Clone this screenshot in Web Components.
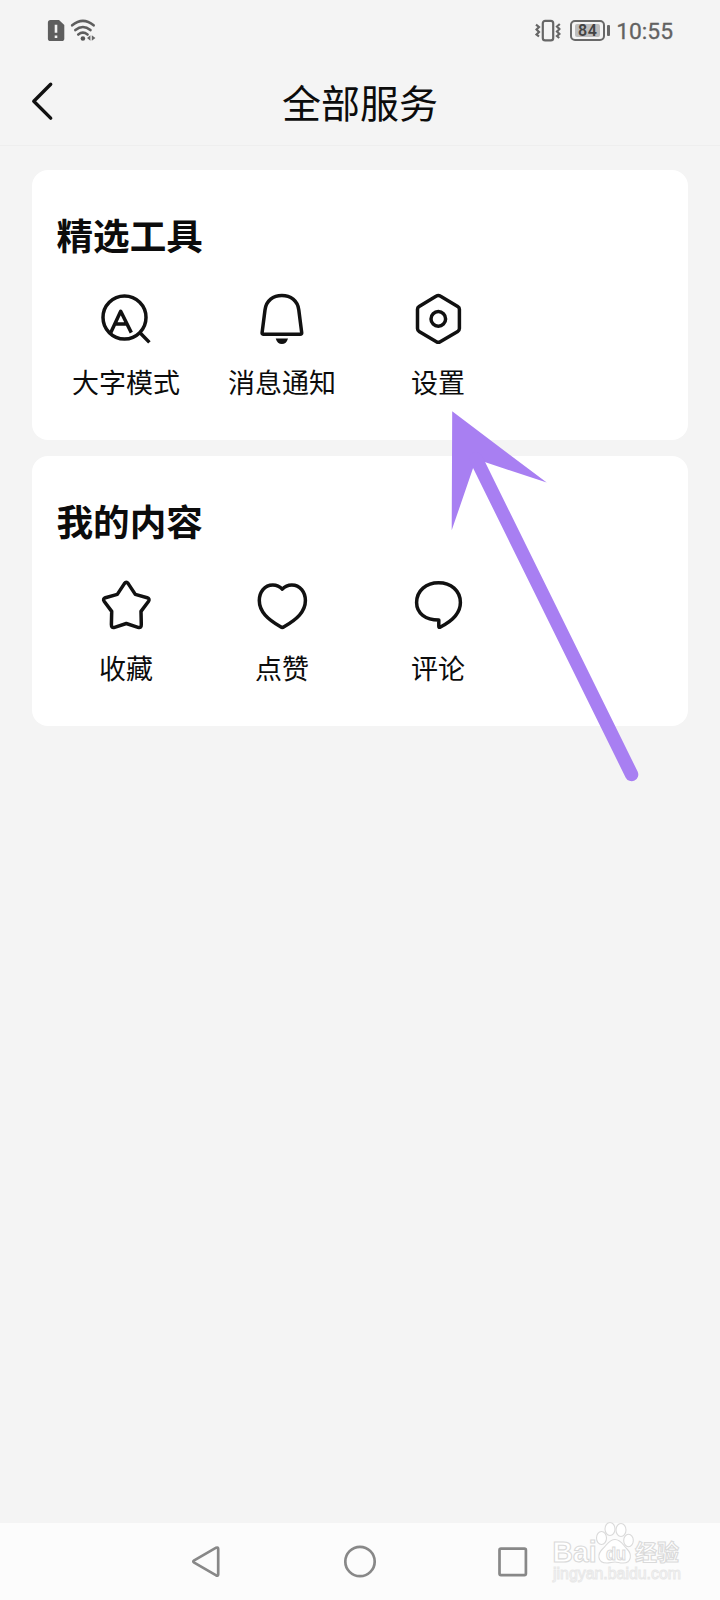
<!DOCTYPE html>
<html lang="zh-CN">
<head>
<meta charset="utf-8">
<title>全部服务</title>
<style>
    body {
        margin: 0;
        background: #f4f4f4;
        color: #0c0c0c;
        font-family: "Noto Sans CJK SC", sans-serif;
    }
</style>
</head>
<body>
<services-page>
    <status-bar slot="top" time="10:55" battery="84"></status-bar>
    <page-header slot="top">全部服务</page-header>
    <service-card heading="精选工具">
        <service-item icon="search">大字模式</service-item>
        <service-item icon="bell">消息通知</service-item>
        <service-item icon="settings">设置</service-item>
    </service-card>
    <service-card heading="我的内容">
        <service-item icon="star">收藏</service-item>
        <service-item icon="heart">点赞</service-item>
        <service-item icon="comment">评论</service-item>
    </service-card>
    <nav-bar slot="bottom"></nav-bar>
    <pointer-arrow slot="over"></pointer-arrow>
    <water-mark slot="over"></water-mark>
</services-page>

<script>
const icons = {
    search: `
        <circle cx="28.5" cy="28.5" r="21.5"/>
        <path d="M44 43.7 53.4 53.4M14.6 44 24.7 22.3 35.3 43.6M19 35H31"/>`,
    bell: `
        <path d="M11.6 45.3H48.2Q49.9 45.3 49.7 43.6L46.8 21C45.6 11.5 38.5 6.6 29.9 6.6S14.2 11.5 13 21L10.1 43.6Q9.9 45.3 11.6 45.3Z"/>
        <path d="M23.7 49.4H36Q34.4 55 29.9 55T23.7 49.4Z" fill="#111" stroke="none"/>`,
    settings: `
        <path d="M28.4 7.1Q30.3 5.9 32.2 7.1L49.7 17.4Q51.4 18.4 51.4 20.2V39.6Q51.4 41.4 49.7 42.4L32.2 52.7Q30.3 53.9 28.4 52.7L11.1 42.4Q9.5 41.4 9.5 39.6V20.2Q9.5 18.4 11.1 17.4Z"/>
        <circle cx="30.3" cy="29.9" r="7.3"/>`,
    star: `
        <path d="M28.4 8.6Q30.3 6 32.2 8.6L39.3 19.4 51.2 22.7Q54 23.7 52.6 26.2L45 36.4 45.3 49.6Q45.4 53.4 42 52.3L30.3 48.5 18.6 52.3Q15.3 53.4 15.4 49.6L15.7 36.4 8.1 26.2Q6.6 23.7 9.4 22.7L21.3 19.4Z"/>`,
    heart: `
        <path d="M30.3 14.2C27.6 11.2 24.5 10 20.8 10 12.5 10 7.3 17.2 7.3 25.6 7.3 36.8 15.8 44.3 28.6 51.8Q30.3 52.9 32 51.8C44.8 44.3 53.4 36.8 53.4 25.6 53.4 17.2 48.1 10 39.8 10 36.1 10 33 11.2 30.3 14.2Z"/>`,
    comment: `
        <path d="M30.8 45V51.2Q30.8 53 32.5 52C43.5 46.5 52.4 38.5 52.4 27.6 52.4 15.5 42.8 7.7 30.6 7.7S8.6 15.5 8.6 27.6C8.6 38.4 17.5 45 30.8 45Z"/>`
};

const pageTemplate = document.createElement('template');
pageTemplate.innerHTML = `
    <style>
        :host {
            display: flex;
            flex-direction: column;
            position: relative;
            width: 720px;
            height: 1600px;
            overflow: hidden;
        }
        main {
            flex: 1;
            display: flex;
            flex-direction: column;
            gap: 16px;
            padding: 24px 32px;
        }
    </style>
    <slot name="top"></slot>
    <main><slot></slot></main>
    <slot name="bottom"></slot>
    <slot name="over"></slot>
`;

class ServicesPage extends HTMLElement {
    constructor() {
        super();
        this.attachShadow({mode: 'open'}).appendChild(pageTemplate.content.cloneNode(true));
    }
}

const statusTemplate = document.createElement('template');
statusTemplate.innerHTML = `
    <style>
        :host {
            display: flex;
            justify-content: space-between;
            align-items: center;
            box-sizing: border-box;
            height: 61px;
            padding: 0 47px;
            color: #626262;
            font-family: Roboto, sans-serif;
        }
        div { display: flex; align-items: center; }
        svg { display: block; }
        .battery {
            display: flex;
            align-items: center;
            gap: 2px;
            margin: 0 6px 0 9px;
        }
        .cell {
            box-sizing: border-box;
            width: 35px;
            height: 21px;
            padding: 2px;
            border: 2px solid #686868;
            border-radius: 5px;
        }
        .level {
            justify-content: center;
            width: 25px;
            height: 13px;
            margin: auto;
            border-radius: 2px;
            background: #bdbdbd;
            color: #444;
            font-size: 16px;
            font-weight: 600;
            letter-spacing: .6px;
        }
        .tip { width: 3px; height: 11px; border-radius: 1px; background: #686868; }
        .time {
            padding-top: 2px;
            font-size: 22.8px;
            line-height: 28px;
            -webkit-text-stroke: .3px #626262;
        }
    </style>
    <div>
        <svg width="50" height="24" viewBox="0 0 50 24">
            <path d="M3.5 1H12L17.3 6V19.5Q17.3 22.1 14.7 22.1H3.5Q.9 22.1.9 19.5V3.6Q.9 1 3.5 1Z" fill="#5e5e5e"/>
            <path d="M9 5.8V13.7M9 16.5V18.9" stroke="#f4f4f4" stroke-width="2.6"/>
            <g fill="none" stroke="#5e5e5e" stroke-width="2.6" stroke-linecap="round">
                <path d="M25.2 6.3Q35.9-2.5 46.6 6.3M28.4 11.1Q35.9 4.9 43.4 11.1M31.3 15.5Q35.9 11.9 40.5 15.5"/>
            </g>
            <circle cx="35.9" cy="19.5" r="2.3" fill="#555"/>
            <path d="M43.4 16.2V21.7L40 19ZM44.8 16.2V21.7L48.4 19Z" fill="#666"/>
        </svg>
    </div>
    <div>
        <svg width="26" height="24" viewBox="0 0 26 24" fill="none" stroke="#666">
            <rect x="7.8" y="1.9" width="10.4" height="19.4" rx="2.4" stroke-width="2.2"/>
            <path d="M1 5.6 4 8 1.5 10.5 4 13 1.5 15.5 4 17.5M24.8 5 22 7.5 24.4 10 22 12.5 24.4 15 22 17 24.2 19" stroke-width="2.2"/>
        </svg>
        <div class="battery">
            <div class="cell"><div class="level"></div></div>
            <div class="tip"></div>
        </div>
        <span class="time"></span>
    </div>
`;

class StatusBar extends HTMLElement {
    constructor() {
        super();
        this._shadowRoot = this.attachShadow({mode: 'open'});
        this._shadowRoot.appendChild(statusTemplate.content.cloneNode(true));
    }

    connectedCallback() {
        this._shadowRoot.querySelector('.level').textContent = this.getAttribute('battery');
        this._shadowRoot.querySelector('.time').textContent = this.getAttribute('time');
    }
}

const headerTemplate = document.createElement('template');
headerTemplate.innerHTML = `
    <style>
        :host {
            display: grid;
            grid-template-columns: 60px 1fr 60px;
            align-items: center;
            box-sizing: border-box;
            height: 85px;
            padding-bottom: 4px;
            border-bottom: 1px solid #eee;
        }
        svg { display: block; margin-left: 30px; }
        h1 {
            margin: 0;
            font-size: 39px;
            font-weight: 400;
            line-height: 56px;
            text-align: center;
        }
    </style>
    <svg width="26" height="42" viewBox="0 0 26 42" fill="none" stroke="#111" stroke-width="3.4" stroke-linecap="round" stroke-linejoin="round">
        <path d="M20.7 4.2 3.8 21.3 20.7 38.1"/>
    </svg>
    <h1><slot></slot></h1>
`;

class PageHeader extends HTMLElement {
    constructor() {
        super();
        this.attachShadow({mode: 'open'}).appendChild(headerTemplate.content.cloneNode(true));
    }
}

const cardTemplate = document.createElement('template');
cardTemplate.innerHTML = `
    <style>
        :host {
            display: block;
            box-sizing: border-box;
            height: 270px;
            padding: 38px 16px 0;
            border-radius: 16px;
            background: #fff;
        }
        h2 {
            margin: 0 0 28px 8.5px;
            font-size: 36.6px;
            font-weight: 700;
            line-height: 53px;
        }
        .items { display: grid; grid-template-columns: repeat(4, 1fr); }
    </style>
    <h2></h2>
    <div class="items"><slot></slot></div>
`;

class ServiceCard extends HTMLElement {
    constructor() {
        super();
        this._shadowRoot = this.attachShadow({mode: 'open'});
        this._shadowRoot.appendChild(cardTemplate.content.cloneNode(true));
    }

    connectedCallback() {
        this._shadowRoot.querySelector('h2').textContent = this.getAttribute('heading');
    }
}

const itemTemplate = document.createElement('template');
itemTemplate.innerHTML = `
    <style>
        :host {
            display: flex;
            flex-direction: column;
            align-items: center;
            gap: 13px;
            font-size: 27px;
            line-height: 40px;
            white-space: nowrap;
        }
        svg { display: block; }
    </style>
    <svg width="60" height="60" viewBox="0 0 60 60" fill="none" stroke="#111" stroke-width="3.5" stroke-linejoin="round"></svg>
    <span><slot></slot></span>
`;

class ServiceItem extends HTMLElement {
    constructor() {
        super();
        this._shadowRoot = this.attachShadow({mode: 'open'});
        this._shadowRoot.appendChild(itemTemplate.content.cloneNode(true));
    }

    connectedCallback() {
        this._shadowRoot.querySelector('svg').innerHTML = icons[this.getAttribute('icon')];
    }
}

const navTemplate = document.createElement('template');
navTemplate.innerHTML = `
    <style>
        :host {
            display: flex;
            justify-content: center;
            align-items: center;
            gap: 113px;
            height: 77px;
            background: #fcfcfc;
        }
        svg {
            display: block;
            fill: none;
            stroke: #888;
            stroke-width: 2.7;
            stroke-linejoin: round;
        }
    </style>
    <svg width="40" height="40"><path d="M7.2 18.4 29.2 5.7Q31.2 4.9 31.2 7V32.2Q31.2 34.2 29.2 33.4L7.2 20.7Q5.4 19.6 7.2 18.4Z"/></svg>
    <svg width="40" height="40"><circle cx="20" cy="19.5" r="14.7"/></svg>
    <svg width="40" height="40"><rect x="6.5" y="6.7" width="26.4" height="26.4" rx="1.5"/></svg>
`;

class NavBar extends HTMLElement {
    constructor() {
        super();
        this.attachShadow({mode: 'open'}).appendChild(navTemplate.content.cloneNode(true));
    }
}

const arrowTemplate = document.createElement('template');
arrowTemplate.innerHTML = `
    <style>
        :host {
            display: block;
            position: absolute;
            left: 440px;
            top: 400px;
        }
        svg { display: block; }
    </style>
    <svg width="210" height="390" viewBox="440 400 210 390">
        <path d="M452.2 411.3 546.7 482.6 484.7 462 473 468.3 451.7 530.3Z" fill="#a87ff2"/>
        <path d="M476 458.8 631.6 774.5" stroke="#a87ff2" stroke-width="13.4" stroke-linecap="round"/>
    </svg>
`;

class PointerArrow extends HTMLElement {
    constructor() {
        super();
        this.attachShadow({mode: 'open'}).appendChild(arrowTemplate.content.cloneNode(true));
    }
}

const markTemplate = document.createElement('template');
markTemplate.innerHTML = `
    <style>
        :host {
            display: block;
            position: absolute;
            left: 540px;
            top: 1515px;
        }
        svg { display: block; }
        text { font-family: "Liberation Sans", "Noto Sans CJK SC", sans-serif; font-weight: 700; }
        .url { font-weight: 400; }
    </style>
    <svg width="160" height="75" viewBox="540 1515 160 75" fill="#fff" stroke="#dadada" stroke-width="1.1">
        <text x="552.5" y="1562" font-size="29" textLength="44" lengthAdjust="spacingAndGlyphs">Bai</text>
        <ellipse cx="601.5" cy="1538" rx="5" ry="6.5"/>
        <ellipse cx="610" cy="1529" rx="5" ry="6.5"/>
        <ellipse cx="621" cy="1530" rx="5" ry="6.5"/>
        <ellipse cx="628.5" cy="1540.5" rx="4.8" ry="6.2"/>
        <path d="M615 1539.5C621 1539.5 623 1545 627 1549 632 1554 632 1563 623 1563 619 1563 618 1562 615 1562S610 1563 607 1563C597 1563 597 1554 603 1548.5 607 1545 609 1539.5 615 1539.5Z"/>
        <text x="606" y="1560" font-size="19" textLength="20" lengthAdjust="spacingAndGlyphs">du</text>
        <text x="635" y="1560" font-size="22" textLength="44" lengthAdjust="spacingAndGlyphs">经验</text>
        <text class="url" x="553" y="1579" font-size="16" stroke="#e8e8e8" stroke-width="1" textLength="128" lengthAdjust="spacingAndGlyphs">jingyan.baidu.com</text>
    </svg>
`;

class WaterMark extends HTMLElement {
    constructor() {
        super();
        this.attachShadow({mode: 'open'}).appendChild(markTemplate.content.cloneNode(true));
    }
}

window.customElements.define('services-page', ServicesPage);
window.customElements.define('status-bar', StatusBar);
window.customElements.define('page-header', PageHeader);
window.customElements.define('service-card', ServiceCard);
window.customElements.define('service-item', ServiceItem);
window.customElements.define('nav-bar', NavBar);
window.customElements.define('pointer-arrow', PointerArrow);
window.customElements.define('water-mark', WaterMark);
</script>
</body>
</html>
